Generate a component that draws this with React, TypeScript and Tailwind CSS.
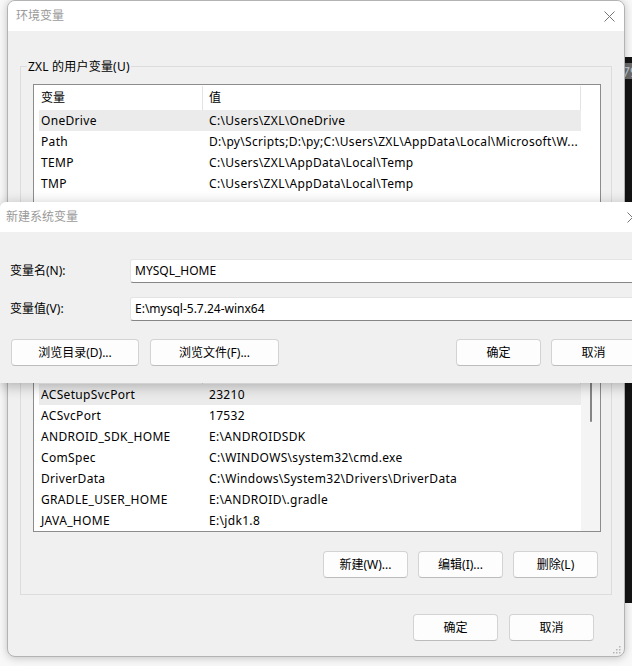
import React from 'react';

const userVars: [string, string][] = [
    ['OneDrive', 'C:\\Users\\ZXL\\OneDrive'],
    ['Path', 'D:\\py\\Scripts;D:\\py;C:\\Users\\ZXL\\AppData\\Local\\Microsoft\\W...'],
    ['TEMP', 'C:\\Users\\ZXL\\AppData\\Local\\Temp'],
    ['TMP', 'C:\\Users\\ZXL\\AppData\\Local\\Temp'],
];

const sysVars: [string, string][] = [
    ['ACSetupSvcPort', '23210'],
    ['ACSvcPort', '17532'],
    ['ANDROID_SDK_HOME', 'E:\\ANDROIDSDK'],
    ['ComSpec', 'C:\\WINDOWS\\system32\\cmd.exe'],
    ['DriverData', 'C:\\Windows\\System32\\Drivers\\DriverData'],
    ['GRADLE_USER_HOME', 'E:\\ANDROID\\.gradle'],
    ['JAVA_HOME', 'E:\\jdk1.8'],
];

function Button({ label, className = 'w-[85px]' }: { label: string; className?: string }) {
    return (
        <button className={`${className} h-[27px] shrink-0 rounded-[4px] border border-[#d3d3d3] border-b-[#bcbcbc] bg-[#fdfdfd] text-[12px] leading-none text-black`}>
            {label}
        </button>
    );
}

function CloseIcon() {
    return (
        <svg width="11" height="11" viewBox="0 0 11 11" className="shrink-0">
            <path d="M0.5 0.5 L10.5 10.5 M10.5 0.5 L0.5 10.5" stroke="#777" strokeWidth="1" fill="none" />
        </svg>
    );
}

function VarTable({ rows, height, scrollbar }: { rows: [string, string][]; height: string; scrollbar?: boolean }) {
    return (
        <div className={`${height} ml-[12px] mr-[10px] flex overflow-hidden border border-[#8c8c8c] bg-white pt-px pl-[5px]`}>
            <div className="flex w-[542px] shrink-0 flex-col">
                {/* header */}
                <div className="flex h-[24px] shrink-0">
                    <div className="flex w-[164px] items-center border-r border-[#e3e3e3] pl-[2px]">变量</div>
                    <div className="flex flex-1 items-center border-r border-[#e3e3e3] pl-[6px]">值</div>
                </div>
                {rows.map(([k, v], i) => (
                    <div key={k} className={`flex h-[21px] shrink-0 items-center whitespace-nowrap tracking-[0.32px] ${i === 0 ? 'bg-[#ebebeb]' : ''}`}>
                        <div className="w-[164px] shrink-0 pl-[2px]">{k}</div>
                        <div className="pl-[6px]">{v}</div>
                    </div>
                ))}
            </div>
            <div className={`flex flex-1 justify-center ${scrollbar ? 'bg-[#f4f4f4]' : ''}`}>
                {scrollbar && <div className="mt-[4px] h-[58px] w-[2px] rounded-full bg-[#858585]" />}
            </div>
        </div>
    );
}

function Group({ label, className, children }: { label: string; className: string; children: React.ReactNode }) {
    return (
        <div className={`relative mx-[12px] shrink-0 border border-[#dcdcdc] pt-[17px] ${className}`}>
            <span className="absolute -top-[9px] left-[6px] bg-[#f0f0f0] px-px leading-[17px] tracking-[0.2px]">{label}</span>
            {children}
        </div>
    );
}

export default function App() {
    return (
        <div className="relative h-[666px] w-[632px] overflow-hidden bg-[#f8f8f8] text-[12px] text-black font-['Noto_Sans','Noto_Sans_CJK_SC',sans-serif]">
            {/* window behind, on the right */}
            <div className="absolute left-[618px] top-[57px] flex h-[546px] w-[30px] flex-col bg-[#151515] pt-[6px]">
                <div className="flex h-[16px] items-center bg-[#6c6c6c] pl-[4px] text-[14px] text-[#b9c3cc]">79</div>
            </div>

            {/* 环境变量 */}
            <div className="relative ml-[7px] flex h-[657px] w-[618px] flex-col overflow-hidden rounded-[8px] border border-[#b3b3b3] bg-[#f0f0f0] shadow-[0_1px_8px_rgba(0,0,0,0.22)]">
                <div className="flex h-[30px] shrink-0 items-center justify-between bg-white pl-[8px] pr-[9px]">
                    <span className="text-[#9a9a9a]">环境变量</span>
                    <CloseIcon />
                </div>

                <div className="flex flex-1 flex-col pt-[35px]">
                    <Group label="ZXL 的用户变量(U)" className="h-[262px]">
                        <VarTable rows={userVars} height="h-[180px]" />
                        <div className="mt-[19px] flex justify-end gap-[10px] pr-[13px]">
                            <Button label="新建(N)..." />
                            <Button label="编辑(E)..." />
                            <Button label="删除(D)" />
                        </div>
                    </Group>

                    <Group label="系统变量(S)" className="mt-[12px] h-[255px]">
                        <VarTable rows={sysVars} height="h-[174px]" scrollbar />
                        <div className="mt-[19px] flex justify-end gap-[10px] pr-[13px]">
                            <Button label="新建(W)..." />
                            <Button label="编辑(I)..." />
                            <Button label="删除(L)" />
                        </div>
                    </Group>

                    <div className="mt-[19px] flex justify-end gap-[11px] pr-[30px]">
                        <Button label="确定" />
                        <Button label="取消" />
                    </div>
                </div>

                {/* resize grip */}
                <svg width="9" height="9" viewBox="0 0 9 9" className="absolute bottom-[2px] right-[3px]">
                    <rect x="7" y="1" width="1.5" height="1.5" fill="#b5b5b5" />
                    <rect x="4" y="4" width="1.5" height="1.5" fill="#b5b5b5" />
                    <rect x="7" y="4" width="1.5" height="1.5" fill="#b5b5b5" />
                    <rect x="1" y="7" width="1.5" height="1.5" fill="#b5b5b5" />
                    <rect x="4" y="7" width="1.5" height="1.5" fill="#b5b5b5" />
                    <rect x="7" y="7" width="1.5" height="1.5" fill="#b5b5b5" />
                </svg>
            </div>

            {/* 新建系统变量 */}
            <div className="absolute left-0 top-[202px] flex h-[181px] w-[660px] flex-col overflow-hidden rounded-tl-[6px] bg-[#f0f0f0] shadow-[0_3px_14px_rgba(0,0,0,0.28)]">
                <div className="flex h-[30px] shrink-0 items-center justify-between bg-white pl-[6px] pr-[22px]">
                    <span className="text-[#9a9a9a]">新建系统变量</span>
                    <CloseIcon />
                </div>
                <div className="flex flex-col px-[10px] pt-[27px]">
                    <div className="flex h-[24px] items-center">
                        <span className="w-[120px] shrink-0">变量名(N):</span>
                        <div className="flex h-full flex-1 items-center rounded-[3px] border border-[#e4e4e4] border-b-[#868686] bg-white pl-[4px]">MYSQL_HOME</div>
                    </div>
                    <div className="mt-[14px] flex h-[24px] items-center">
                        <span className="w-[120px] shrink-0">变量值(V):</span>
                        <div className="flex h-full flex-1 items-center rounded-[3px] border border-[#e4e4e4] border-b-[#868686] bg-white pl-[4px]">E:\mysql-5.7.24-winx64</div>
                    </div>
                    <div className="mt-[18px] ml-px flex">
                        <Button label="浏览目录(D)..." className="w-[128px]" />
                        <Button label="浏览文件(F)..." className="ml-[11px] w-[129px]" />
                        <Button label="确定" className="ml-[177px] w-[85px]" />
                        <Button label="取消" className="ml-[10px] w-[85px]" />
                    </div>
                </div>
            </div>
        </div>
    );
}
